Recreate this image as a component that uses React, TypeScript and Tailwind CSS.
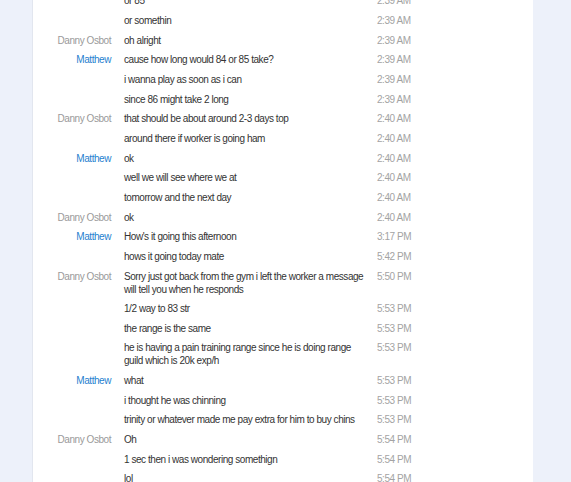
import React from 'react';

type Msg = { name?: string; me?: boolean; text: string; time: string };

const messages: Msg[] = [
  { text: 'or 85', time: '2:39 AM' },
  { text: 'or somethin', time: '2:39 AM' },
  { name: 'Danny Osbot', text: 'oh alright', time: '2:39 AM' },
  { name: 'Matthew', me: true, text: 'cause how long would 84 or 85 take?', time: '2:39 AM' },
  { text: 'i wanna play as soon as i can', time: '2:39 AM' },
  { text: 'since 86 might take 2 long', time: '2:39 AM' },
  { name: 'Danny Osbot', text: 'that should be about around 2-3 days top', time: '2:40 AM' },
  { text: 'around there if worker is going ham', time: '2:40 AM' },
  { name: 'Matthew', me: true, text: 'ok', time: '2:40 AM' },
  { text: 'well we will see where we at', time: '2:40 AM' },
  { text: 'tomorrow and the next day', time: '2:40 AM' },
  { name: 'Danny Osbot', text: 'ok', time: '2:40 AM' },
  { name: 'Matthew', me: true, text: "How's it going this afternoon", time: '3:17 PM' },
  { text: 'hows it going today mate', time: '5:42 PM' },
  { name: 'Danny Osbot', text: 'Sorry just got back from the gym i left the worker a message will tell you when he responds', time: '5:50 PM' },
  { text: '1/2 way to 83 str', time: '5:53 PM' },
  { text: 'the range is the same', time: '5:53 PM' },
  { text: 'he is having a pain training range since he is doing range guild which is 20k exp/h', time: '5:53 PM' },
  { name: 'Matthew', me: true, text: 'what', time: '5:53 PM' },
  { text: 'i thought he was chinning', time: '5:53 PM' },
  { text: 'trinity or whatever made me pay extra for him to buy chins', time: '5:53 PM' },
  { name: 'Danny Osbot', text: 'Oh', time: '5:54 PM' },
  { text: '1 sec then i was wondering somethign', time: '5:54 PM' },
  { text: 'lol', time: '5:54 PM' },
];

const Row: React.FC<{ m: Msg }> = ({ m }) => (
  <div className="flex py-[3.33px] leading-[13px]">
    <div className={`w-[78px] shrink-0 text-right ${m.me ? 'text-[#1f7fcf]' : 'text-[#9a9a9a]'}`}>
      {m.name}
    </div>
    <div className="w-[266px] shrink-0 pl-[13px] pr-[8px] text-[#333]">{m.text}</div>
    <div className="shrink-0 text-[#a3a3a3]">{m.time}</div>
  </div>
);

export default function App() {
  return (
    <div className="h-[482px] overflow-hidden bg-[#edf1fa]">
      <div
        className="ml-[32px] w-[501px] h-full bg-white border-l border-[#e2e6ef] text-[10px] tracking-[-0.45px] overflow-hidden"
        style={{ fontFamily: '"Liberation Sans", Arial, sans-serif' }}
      >
        <div className="-mt-[9px]">
          {messages.map((m, i) => (
            <Row key={i} m={m} />
          ))}
        </div>
      </div>
    </div>
  );
}
